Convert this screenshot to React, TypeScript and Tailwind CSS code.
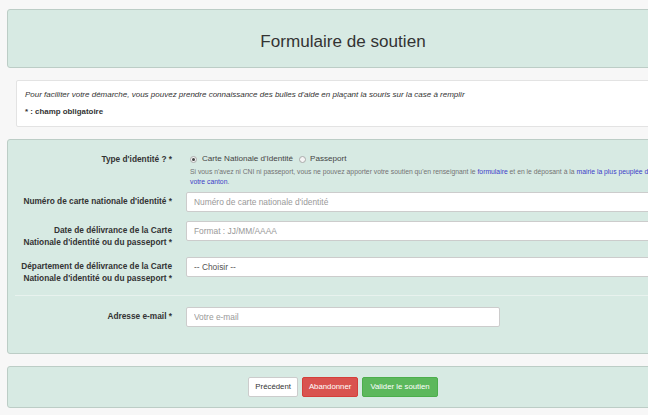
import React from 'react';

const Label = ({ children }: { children: React.ReactNode }) => (
  <div className="w-[161px] shrink-0 pr-[6px] pt-[3px] text-right text-[8.3px] font-bold leading-[12px] text-[#333]">
    {children}
  </div>
);

const TextInput = ({ placeholder, className = '' }: { placeholder: string; className?: string }) => (
  <input
    type="text"
    placeholder={placeholder}
    className={`block h-[20px] rounded-[2px] border border-[#ccc] bg-white px-[7px] text-[8.4px] text-[#555] outline-none placeholder:text-[#999] ${className}`}
  />
);

const Radio = ({ checked }: { checked?: boolean }) => (
  <span className="flex h-[7px] w-[7px] items-center justify-center rounded-full border border-[#aaa] bg-[#f4f4f4]">
    {checked && <span className="h-[3px] w-[3px] rounded-full bg-[#444]" />}
  </span>
);

export default function App() {
  return (
    <div className="h-[415px] w-[648px] overflow-hidden bg-[#f7f7f7] font-['Liberation_Sans',Arial,sans-serif] text-[#333]">
      <div className="w-[686px] px-[7px] pt-[9px]">
        {/* header */}
        <div className="h-[59px] rounded-[3px] border border-[#bccdc6] bg-[#d7eae3] pt-[22px] text-center">
          <h1 className="text-[17.1px] font-normal leading-[20px] text-[#333]">Formulaire de soutien</h1>
        </div>

        {/* aide */}
        <div className="mx-[9px] mt-[12px] h-[47px] rounded-[2px] border border-[#e3e3e3] bg-white px-[8px] pt-[9px]">
          <p className="text-[8px] italic leading-[10px] text-[#333]">
            Pour faciliter votre démarche, vous pouvez prendre connaissance des bulles d'aide en plaçant la souris sur la case à remplir
          </p>
          <p className="mt-[7px] text-[7.9px] font-bold leading-[10px] text-[#333]">* : champ obligatoire</p>
        </div>

        {/* formulaire */}
        <div className="mt-[12px] h-[215px] rounded-[3px] border border-[#bccdc6] bg-[#d7eae3] pl-[9px] pr-[9px] pt-[13px]">
          <div className="flex">
            <div className="w-[161px] shrink-0 pr-[6px] text-right text-[8.3px] font-bold leading-[12px]">
              Type d'identité ? *
            </div>
            <div className="flex-1 pl-[12px] pr-[8px]">
              <div className="flex h-[12px] items-center text-[8.1px] leading-[12px] text-[#444]">
                <Radio checked />
                <span className="ml-[5px]">Carte Nationale d'Identité</span>
                <span className="ml-[6px]"><Radio /></span>
                <span className="ml-[4px]">Passeport</span>
              </div>
              <p className="mt-[2px] text-[6.8px] leading-[10px] text-[#737373]">
                Si vous n'avez ni CNI ni passeport, vous ne pouvez apporter votre soutien qu'en renseignant le{' '}
                <a className="text-[#3d3dc8]">formulaire</a> et en le déposant à la{' '}
                <a className="text-[#3d3dc8]">mairie la plus peuplée de votre canton</a>.
              </p>
            </div>
          </div>

          <div className="mt-[5px] flex">
            <Label>Numéro de carte nationale d'identité *</Label>
            <div className="flex-1 pl-[8px]">
              <TextInput placeholder="Numéro de carte nationale d'identité" className="w-full" />
            </div>
          </div>

          <div className="mt-[9px] flex">
            <Label>
              Date de délivrance de la Carte
              <br />
              Nationale d'identité ou du passeport *
            </Label>
            <div className="flex-1 pl-[8px]">
              <TextInput placeholder="Format : JJ/MM/AAAA" className="w-full" />
            </div>
          </div>

          <div className="mt-[9px] flex">
            <Label>
              Département de délivrance de la Carte
              <br />
              Nationale d'identité ou du passeport *
            </Label>
            <div className="flex-1 pl-[8px]">
              <div className="flex h-[20px] w-full items-center rounded-[2px] border border-[#ccc] bg-white px-[7px] text-[8.4px] text-[#555]">
                -- Choisir --
              </div>
            </div>
          </div>

          <div className="ml-[-2px] mt-[11px] border-t border-[#e8f2ee]" />

          <div className="mt-[11px] flex">
            <Label>Adresse e-mail *</Label>
            <div className="flex-1 pl-[8px]">
              <TextInput placeholder="Votre e-mail" className="w-[314px]" />
            </div>
          </div>
        </div>

        {/* boutons */}
        <div className="mt-[12px] flex h-[42px] items-center justify-center gap-[4px] rounded-[3px] border border-[#bccdc6] bg-[#d7eae3]">
          <button className="h-[20px] rounded-[2px] border border-[#ccc] bg-white px-[6px] text-[7.8px] text-[#333]">
            Précédent
          </button>
          <button className="h-[20px] rounded-[2px] border border-[#d43f3a] bg-[#d9534f] px-[6px] text-[7.8px] text-white">
            Abandonner
          </button>
          <button className="h-[20px] rounded-[2px] border border-[#4cae4c] bg-[#5cb85c] px-[7px] text-[7.8px] text-white">
            Valider le soutien
          </button>
        </div>
      </div>
    </div>
  );
}
